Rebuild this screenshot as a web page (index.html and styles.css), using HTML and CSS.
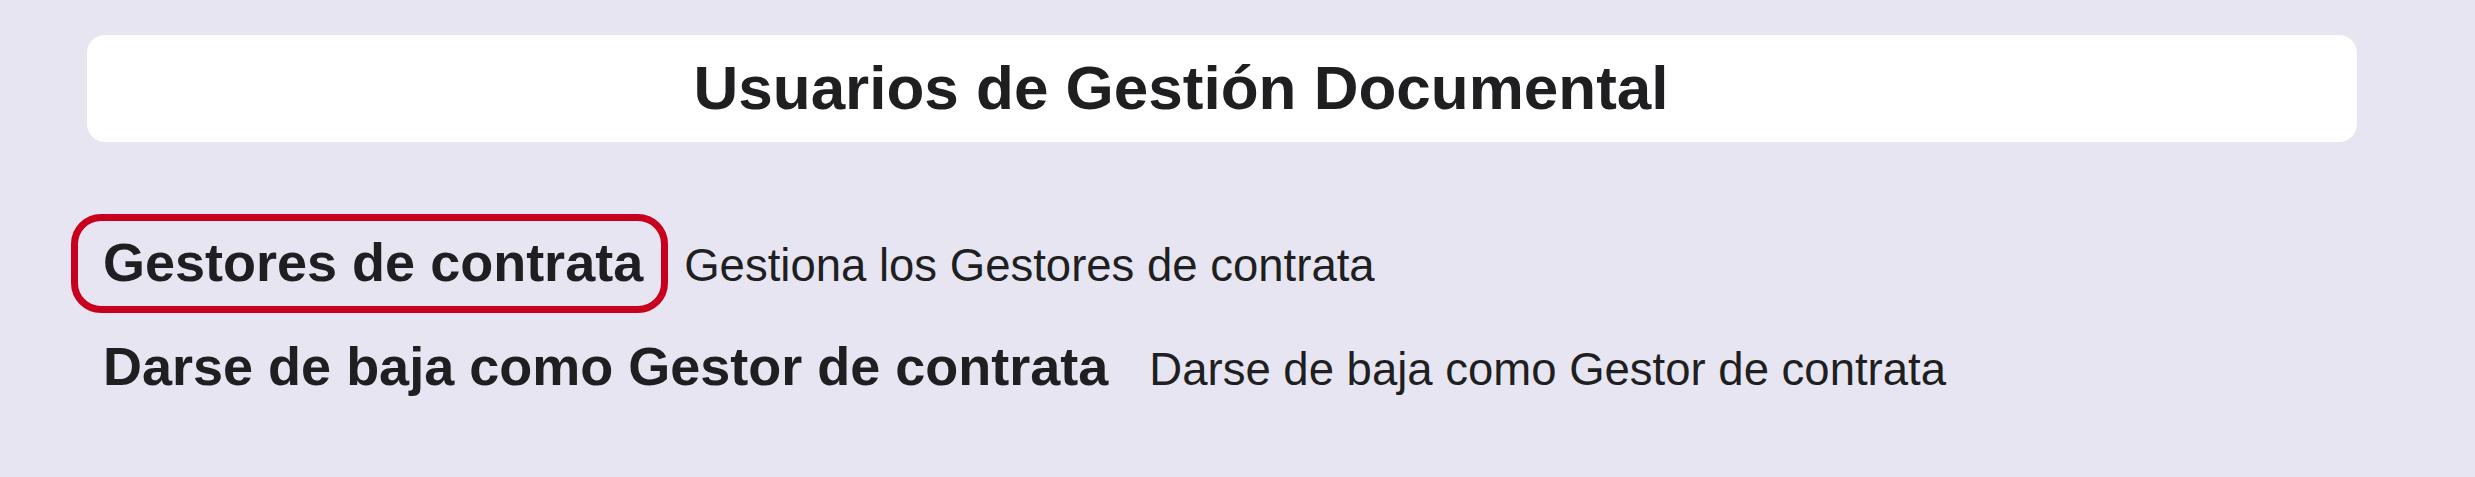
FILE: index.html
```html
<!DOCTYPE html>
<html lang="es">
<head>
    <meta charset="UTF-8">
    <meta name="viewport" content="width=device-width, initial-scale=1.0">
    <title>Usuarios de Gestión Documental</title>
    <link rel="stylesheet" href="styles.css">
</head>
<body>
    <header class="title-card">
        <h1>Usuarios de Gestión Documental</h1>
    </header>

    <main class="options">
        <div class="option">
            <a href="#" class="option-link selected">Gestores de contrata</a>
            <span class="option-desc">Gestiona los Gestores de contrata</span>
        </div>
        <div class="option">
            <a href="#" class="option-link">Darse de baja como Gestor de contrata</a>
            <span class="option-desc">Darse de baja como Gestor de contrata</span>
        </div>
    </main>
</body>
</html>
```

FILE: styles.css
```css
body {
    margin: 0;
    padding: 35px 118px 0 87px;
    font-family: "Liberation Sans", Arial, sans-serif;
    background-color: #e6e5f1;
    color: #1f1f22;
    height: 477px;
    box-sizing: border-box;
}

.title-card {
    background-color: white;
    border-radius: 18px;
    padding: 22px 82px 23px 0;
    text-align: center;
}

.title-card h1 {
    margin: 0;
    font-size: 62px;
    line-height: 62px;
    font-weight: bold;
}

.options {
    margin-top: 93px;
    padding-left: 16px;
}

.option {
    display: flex;
    align-items: baseline;
    gap: 41px;
    margin-bottom: 46px;
}

.option-link {
    position: relative;
    font-size: 54px;
    line-height: 54px;
    font-weight: bold;
    color: #1f1f22;
    text-decoration: none;
}

.option-link.selected::after {
    content: "";
    position: absolute;
    left: -32px;
    right: -25px;
    top: -21px;
    bottom: -24px;
    border: 7px solid #c8001e;
    border-radius: 30px;
}

.option-desc {
    font-size: 45.5px;
    line-height: 54px;
}
```
